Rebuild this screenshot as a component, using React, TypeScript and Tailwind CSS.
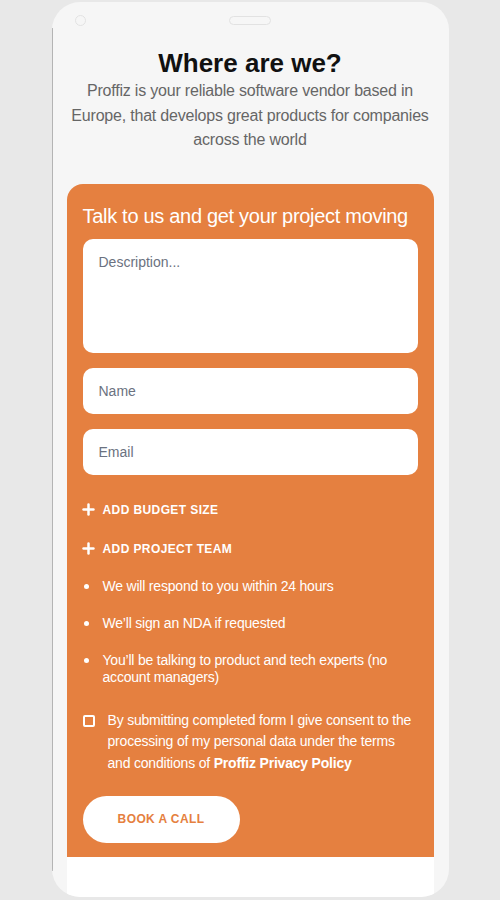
import { Plus } from 'lucide-react';

const bullets = [
  'We will respond to you within 24 hours',
  'We’ll sign an NDA if requested',
  'You’ll be talking to product and tech experts (no account managers)',
];

function AddRow({ label, className = '' }: { label: string; className?: string }) {
  return (
    <button type="button" className={`flex h-[20px] items-center text-white ${className}`}>
      <Plus size={17} strokeWidth={3.5} className="-ml-[3px]" />
      <span className="ml-[6px] text-[12px] font-bold uppercase tracking-[0.4px]">{label}</span>
    </button>
  );
}

export default function App() {
  return (
    <div
      className="flex min-h-[900px] w-full justify-center bg-[#e8e8e8] pt-[2px]"
      style={{ fontFamily: '"Liberation Sans", Arial, sans-serif' }}
    >
      <div className="relative flex h-[895px] w-[397px] flex-col overflow-hidden rounded-[28px] bg-[#f6f6f6]">
        {/* left frame edge */}
        <div className="absolute left-0 top-[26px] bottom-[26px] w-px bg-[#b4b4b4]" />

        {/* status bar */}
        <div className="mt-[12.5px] grid h-[11px] grid-cols-[1fr_auto_1fr] items-center">
          <div className="pl-[23px]">
            <div className="h-[11px] w-[11px] rounded-full border-[1.5px] border-[#e2e2e2]" />
          </div>
          <div className="h-[9px] w-[42px] rounded-full border-[1.5px] border-[#e2e2e2]" />
          <div />
        </div>

        {/* header */}
        <h1 className="mt-[22.5px] text-center text-[26px] font-bold leading-[30px] text-[#111]">
          Where are we?
        </h1>
        <p className="mx-auto mt-[1px] w-[370px] text-center text-[16px] leading-[24.5px] tracking-[-0.2px] text-[#666]">
          Proffiz is your reliable software vendor based in Europe, that develops great products for companies across the world
        </p>

        {/* form */}
        <div className="mx-[15px] mt-[31px] flex flex-1 flex-col">
          <div className="flex flex-col rounded-t-[16px] bg-[#e58040] px-[16px] pt-[20px] pb-[14px]">
            <h2 className="text-[20px] leading-[24px] tracking-[-0.3px] text-white">
              Talk to us and get your project moving
            </h2>

            <textarea
              placeholder="Description..."
              className="mt-[11px] h-[114px] w-full resize-none rounded-[10px] bg-white px-[16px] pt-[13px] text-[14px] leading-[20px] text-[#333] placeholder:text-[#6b7280] outline-none"
            />
            <input
              placeholder="Name"
              className="mt-[15px] h-[46px] w-full rounded-[10px] bg-white px-[16px] text-[14px] text-[#333] placeholder:text-[#6b7280] outline-none"
            />
            <input
              placeholder="Email"
              className="mt-[15px] h-[46px] w-full rounded-[10px] bg-white px-[16px] text-[14px] text-[#333] placeholder:text-[#6b7280] outline-none"
            />

            <AddRow label="Add budget size" className="mt-[25px]" />
            <AddRow label="Add project team" className="mt-[19px]" />

            <ul className="mt-[19.5px] flex flex-col gap-[20px]">
              {bullets.map((b) => (
                <li key={b} className="flex items-start text-[14px] leading-[17px] tracking-[-0.2px] text-white">
                  <span className="ml-[1px] mt-[6px] h-[5px] w-[5px] shrink-0 rounded-full bg-white" />
                  <span className="ml-[14px]">{b}</span>
                </li>
              ))}
            </ul>

            <label className="mt-[23.5px] flex items-start">
              <span className="mt-[5px] h-[12px] w-[12px] shrink-0 rounded-[2px] border-2 border-white" />
              <span className="ml-[13px] text-[14px] leading-[21.75px] tracking-[-0.2px] text-white">
                By submitting completed form I give consent to the processing of my personal data under the terms and conditions of{' '}
                <span className="font-bold">Proffiz Privacy Policy</span>
              </span>
            </label>

            <button
              type="button"
              className="mt-[21px] h-[47px] w-[157px] rounded-full bg-white text-[12px] font-bold uppercase tracking-[0.4px] text-[#e58040]"
            >
              Book a call
            </button>
          </div>
          <div className="flex-1 bg-white" />
        </div>
      </div>
    </div>
  );
}
